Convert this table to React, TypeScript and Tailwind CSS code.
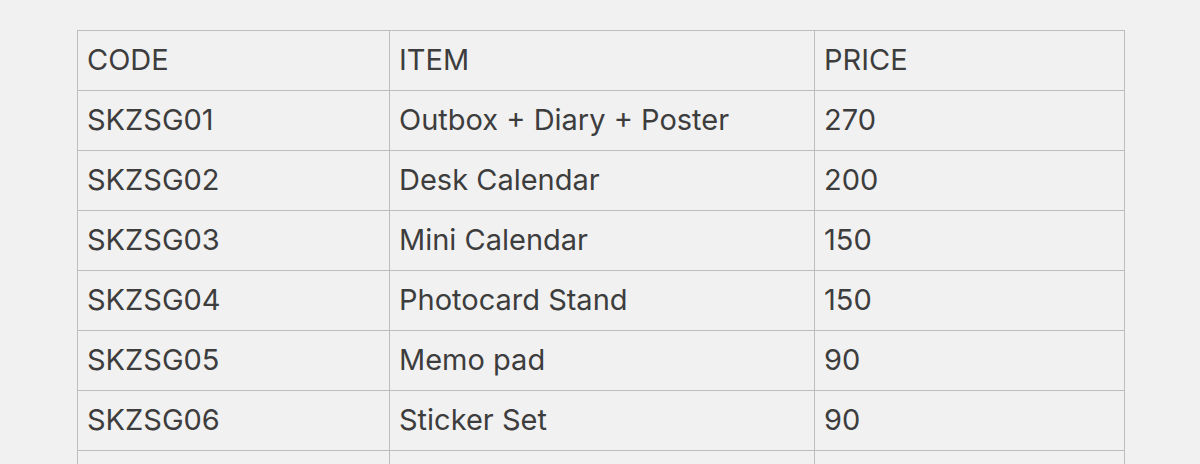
import React from "react";

const rows: [string, string, string][] = [
  ["CODE", "ITEM", "PRICE"],
  ["SKZSG01", "Outbox + Diary + Poster", "270"],
  ["SKZSG02", "Desk Calendar", "200"],
  ["SKZSG03", "Mini Calendar", "150"],
  ["SKZSG04", "Photocard Stand", "150"],
  ["SKZSG05", "Memo pad", "90"],
  ["SKZSG06", "Sticker Set", "90"],
  ["", "", ""],
];

export default function App() {
  return (
    <div
      className="w-[1200px] h-[464px] overflow-hidden bg-[#f1f1f1] pt-[30px] pl-[77px]"
      style={{ fontFamily: "Inter, 'Liberation Sans', sans-serif" }}
    >
      <table className="border-collapse text-[29px] text-[#3d3d3d] w-[1047px] table-fixed">
        <colgroup>
          <col className="w-[312px]" />
          <col className="w-[425px]" />
          <col className="w-[310px]" />
        </colgroup>
        <tbody>
          {rows.map((r, i) => (
            <tr key={i} className="h-[60px]">
              {r.map((c, j) => (
                <td
                  key={j}
                  className="border-[1.5px] border-[#bdbdbd] px-[9px] pb-[2px] align-middle whitespace-nowrap"
                >
                  {c}
                </td>
              ))}
            </tr>
          ))}
        </tbody>
      </table>
    </div>
  );
}
